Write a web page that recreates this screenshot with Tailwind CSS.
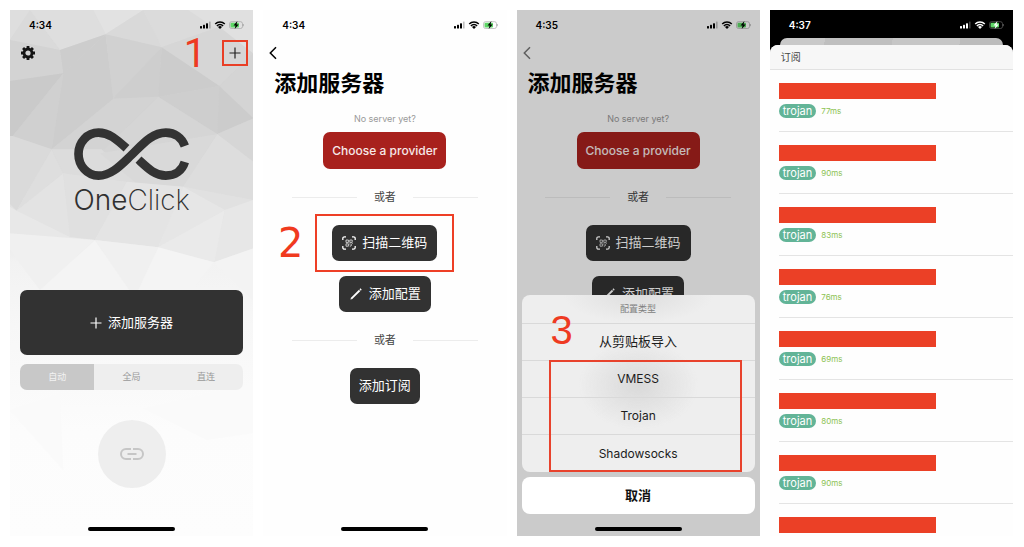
<!DOCTYPE html>
<html lang="zh-CN">
<head>
<meta charset="utf-8">
<meta name="viewport" content="width=device-width, initial-scale=1">
<title>OneClick</title>
<script src="https://cdn.jsdelivr.net/npm/@tailwindcss/browser@4"></script>
</head>
<body class="bg-white font-['Inter','Noto_Sans_CJK_SC',sans-serif] text-black">

<!-- Shared icons -->
<svg class="hidden" aria-hidden="true">
  <symbol id="status" viewBox="0 0 44 10">
    <g fill="currentColor">
      <rect x="0" y="6" width="2" height="2.5" rx=".5"/><rect x="3" y="4.8" width="2" height="3.7" rx=".5"/><rect x="6" y="3.2" width="2" height="5.3" rx=".5"/><rect x="9" y="1.5" width="1.6" height="7" rx=".5" opacity=".25"/>
      <path d="M20 9 18 6.900a2.800 2.800 0 0 1 4 0z"/>
    </g>
    <g fill="none" stroke="currentColor" stroke-width="1.500"><path d="M15.200 4a6.700 6.700 0 0 1 9.600 0"/><path d="M16.900 5.900a4.300 4.300 0 0 1 6.200 0"/></g>
    <rect x="29.500" y="1.700" width="13" height="6.800" rx="2" fill="none" stroke="#8a8a8a" stroke-opacity=".6" stroke-width=".8"/>
    <rect x="30.500" y="2.700" width="8.500" height="4.800" rx="1" fill="#5fd668"/>
    <path d="M43.300 4v2.200" stroke="#8a8a8a" stroke-opacity=".6"/>
    <path d="M37.400 1 33.500 5.600h2.100L34.700 9l4-4.500h-2.200z" fill="currentColor"/>
  </symbol>
  <symbol id="plus" viewBox="0 0 12 12"><path d="M6 .5v11M.5 6h11" fill="none" stroke="currentColor" stroke-width="1.200"/></symbol>
  <symbol id="back" viewBox="0 0 8 14"><path d="M7 1.200 1.300 7 7 12.800" fill="none" stroke="currentColor" stroke-width="1.500"/></symbol>
  <symbol id="scan" viewBox="0 0 14 14">
    <path d="M.8 4V2.500A1.700 1.700 0 0 1 2.500.8H4M10 .8h1.500a1.700 1.700 0 0 1 1.700 1.700V4M13.200 10v1.500a1.700 1.700 0 0 1-1.700 1.700H10M4 13.200H2.500A1.700 1.700 0 0 1 .8 11.500V10" fill="none" stroke="currentColor" stroke-width="1.300"/>
    <g fill="none" stroke="currentColor" stroke-width=".7"><path d="M4 4h2.400v2.400H4zM7.800 4h2.400v2.400H7.800zM4 7.800h2.400v2.400H4z"/></g>
    <path d="M7.500 7.500h1v1h-1zM9 8.500h1v1H9zM7.800 9.600h1v1h-1zM9.800 7.200h.8V8h-.8z" fill="currentColor"/>
  </symbol>
  <symbol id="pen" viewBox="0 0 14 14"><path d="M2.600 11.400 10.600 3.500M11.100 3l1-1" fill="none" stroke="currentColor" stroke-width="1.800"/><path d="m1.400 12.600.6-2.100 1.500 1.500z" fill="currentColor"/></symbol>
</svg>

<main class="grid min-h-screen grid-cols-4 gap-[10px] pt-[10px] pr-[11px] pb-[11px] pl-[10px]">

  <!-- Home -->
  <section class="relative isolate flex flex-col overflow-hidden bg-[#fcfcfc] pb-[5px]">
    <svg class="absolute inset-0 -z-10 h-full w-full" viewBox="0 0 730 1578" preserveAspectRatio="none" aria-hidden="true">
      <defs>
        <linearGradient id="sky" x1="0" y1="0" x2="0" y2="1578" gradientUnits="userSpaceOnUse">
          <stop offset="0" stop-color="#dedede"/><stop offset=".13" stop-color="#d1d1d1"/><stop offset=".22" stop-color="#cfcfcf"/><stop offset=".3" stop-color="#dadada"/><stop offset=".42" stop-color="#e6e6e6"/><stop offset=".48" stop-color="#f2f2f2"/><stop offset=".6" stop-color="#f7f7f7"/><stop offset=".8" stop-color="#fcfcfc"/><stop offset="1" stop-color="#fdfdfd"/>
        </linearGradient>
      </defs>
      <path fill="url(#sky)" d="M0 0h730v1578H0z"/>
      <path fill="#dedede" d="M0 0h60L0 90z"/><path fill="#dadada" d="M60 0 150 120 0 90z"/>
      <path fill="#dedede" d="M60 0h190l37 73-137 47z"/><path fill="#e2e2e2" d="M250 0h150L287 73z"/>
      <path fill="#d9d9d9" d="M400 0l55 112-168-39z"/><path fill="#dbdbdb" d="M400 0h135l93 50-173 62z"/>
      <path fill="#e0e0e0" d="M535 0h195v130z"/><path fill="#d6d6d6" d="M628 50l102 80-102 98-173-116z"/>
      <path fill="#d3d3d3" d="M0 90l150 30 10 70L0 213z"/><path fill="#cdcdcd" d="M150 120 287 73 160 190z"/>
      <path fill="#cdcdcd" d="M287 73 310 266 125 418 160 190z"/><path fill="#d1d1d1" d="M287 73l168 39-145 154z"/>
      <path fill="#cecece" d="M455 112l-10 148-135 6z"/><path fill="#cccccc" d="M455 112l173 116-183 32z"/>
      <path fill="#d4d4d4" d="M730 130v195L628 228z"/><path fill="#cacaca" d="M0 213l160-23L8 378H0z"/>
      <path fill="#d0d0d0" d="M160 190l-35 228L8 378z"/><path fill="#d3d3d3" d="M310 266l135-6-175 170-145-12z"/>
      <path fill="#cecece" d="M628 228l-6 144-177-112z"/><path fill="#cccccc" d="M628 228l102 97-108 47z"/>
      <path fill="#d5d5d5" d="M445 260l177 112-352 58z"/><path fill="#d6d6d6" d="M622 372l108-47v130z"/>
      <path fill="#dadada" d="M0 378h8l117 40-105 184-20-20z"/><path fill="#dedede" d="M125 418l35 72L20 602z"/>
      <path fill="#dcdcdc" d="M125 418h150l105 102-220-30z"/><path fill="#d9d9d9" d="M270 430l352-58-102 158-140-10z"/>
      <path fill="#dddddd" d="M622 372l108 83v115L520 530z"/>
      <path fill="#e3e3e3" d="M160 490 20 602l160 80z"/><path fill="#e0e0e0" d="M160 490l190 25-95 175-75-8z"/>
      <path fill="#e4e4e4" d="M350 515l170 15-75 182-190-22z"/><path fill="#e1e1e1" d="M520 530l210 40-85 30z"/>
      <path fill="#e6e6e6" d="M520 530l125 70-200 112z"/><path fill="#eaeaea" d="M645 600l-33 157-167-45z"/>
      <path fill="#e7e7e7" d="M645 600l85-30v145l-118 42z"/><path fill="#e8e8e8" d="M0 590l20 12 160 80L0 670z"/>
      <path fill="#e8e8e8" d="M0 670l180 12 75 8z"/>
      <path fill="#f0f0f0" d="M0 670l255 20L90 840 0 720z"/><path fill="#f4f4f4" d="M255 690 90 840l-10 60h320z"/>
      <path fill="#f0f0f0" d="M255 690l190 22-65 160z"/><path fill="#f4f4f4" d="M445 712l167 45-90 115H370z"/>
      <path fill="#f3f3f3" d="M612 757l118-42v157z"/>
      <path fill="#fafafa" d="M0 1200l150-50 10 230z"/><path fill="#fafafa" d="M400 1195l330-75v150l-140 20z"/>
    </svg>
    <div class="flex h-[30px] items-center justify-between pr-[9px] pl-[19px] text-[10px] font-semibold">
      <span>4:34</span>
      <svg class="h-[10px] w-[44px]" role="img" aria-label="Status"><use href="#status"/></svg>
    </div>
    <header class="flex h-[26px] items-center justify-between pr-[12px] pl-[11px]">
      <button type="button" aria-label="设置">
        <svg class="size-[14px]" viewBox="0 0 14 14" fill="none" stroke="#151515"><circle cx="7" cy="7" r="4" stroke-width="2.800"/><path stroke-width="2.800" d="M7 0v2.500M7 11.500V14M0 7h2.500M11.500 7H14M2.050 2.050l1.700 1.700M10.250 10.250l1.700 1.700M2.050 11.950l1.700-1.700M10.250 3.750l1.700-1.700"/></svg>
      </button>
      <div class="relative">
        <button type="button" aria-label="添加" class="flex size-[12px] text-[#222]"><svg class="size-[12px]"><use href="#plus"/></svg></button>
        <div class="absolute -inset-[7px] border-2 border-[#e93f26]"></div>
        <span class="absolute -top-[14px] right-[35px] font-['Roboto'] text-[40px] leading-[42px] text-[#ee3a22]">1</span>
      </div>
    </header>
    <div class="mt-[62px] flex flex-col items-center text-[#303030]">
      <svg class="h-[52px] w-[115px]" viewBox="222 384 344 156" fill="none" stroke="#333" stroke-width="26" role="img" aria-label="OneClick logo">
        <path d="M379 445C347 416 326 398 295 398c-34 0-60 29-60 64s26 65 60 65c40 0 70-35 100-63 32-31 60-66 102-66 27 0 48 15 57 40"/>
        <path d="M415 479c26 24 49 48 82 48 28 0 49-15 57-41"/>
      </svg>
      <h1 class="mt-[4px] text-[28px] leading-[32px] font-light">One<span class="font-extralight">Click</span></h1>
    </div>
    <button type="button" class="mx-[10px] mt-[74px] flex h-[65px] items-center justify-center gap-[6px] rounded-[7px] bg-[#323232] text-[13px] text-white">
      <svg class="size-[12px]"><use href="#plus"/></svg>添加服务器
    </button>
    <div class="mx-[10px] mt-[9px] grid h-[26px] grid-cols-3 overflow-hidden rounded-[7px] bg-[#eeeeee] text-[9px] text-[#999]">
      <button type="button" aria-pressed="true" class="bg-[#c8c8c8] text-[#f3f3f3]">自动</button>
      <button type="button" aria-pressed="false">全局</button>
      <button type="button" aria-pressed="false">直连</button>
    </div>
    <button type="button" aria-label="连接" class="mt-[30px] flex size-[68px] items-center justify-center self-center rounded-full bg-[#eeeeee]">
      <svg class="h-[12px] w-[24px]" viewBox="0 0 24 12" fill="none" stroke="#c6c6c6" stroke-width="2"><path d="M11 1H6a5 5 0 0 0 0 10h5M13 1h5a5 5 0 0 1 0 10h-5M7.500 6h9"/></svg>
    </button>
    <div class="mt-auto h-[4px] w-[87px] self-center rounded-full bg-black"></div>
  </section>

  <!-- Add server -->
  <section class="relative flex flex-col items-center bg-[#fefefe] pb-[5px]">
    <div class="flex h-[30px] items-center justify-between self-stretch pr-[9px] pl-[19px] text-[10px] font-semibold">
      <span>4:34</span>
      <svg class="h-[10px] w-[44px]" role="img" aria-label="Status"><use href="#status"/></svg>
    </div>
    <header class="flex h-[26px] items-center self-stretch px-[6px]">
      <button type="button" aria-label="返回"><svg class="h-[14px] w-[8px]"><use href="#back"/></svg></button>
    </header>
    <h2 class="self-stretch px-[11px] text-[22px] leading-[34px] font-bold">添加服务器</h2>
    <p class="mt-[12px] text-[9px] leading-[14px] text-[#999]">No server yet?</p>
    <button type="button" class="mt-[6px] h-[37px] rounded-[7px] bg-[#a8211d] px-[9px] text-[12px] font-medium text-[#f6e9e9]">Choose a provider</button>
    <div class="mt-[20px] flex items-center gap-[17px] text-[11px] leading-[16px] text-[#444]">
      <span class="h-px w-[65px] bg-[#ececec]"></span>或者<span class="h-px w-[65px] bg-[#ececec]"></span>
    </div>
    <div class="relative mt-[20px]">
      <button type="button" class="flex h-[36px] items-center gap-[6px] rounded-[7px] bg-[#323232] px-[10px] text-[13px] text-white"><svg class="size-[14px]"><use href="#scan"/></svg>扫描二维码</button>
      <div class="absolute -inset-x-[17px] -inset-y-[11px] border-2 border-[#ee3f26]"></div>
      <span class="absolute -top-[5px] right-full mr-[29px] font-['DejaVu_Sans'] text-[40px] leading-[46px] text-[#f03a1e]">2</span>
    </div>
    <button type="button" class="mt-[15px] flex h-[36px] items-center gap-[6px] rounded-[7px] bg-[#323232] px-[10px] text-[13px] text-white"><svg class="size-[14px]"><use href="#pen"/></svg>添加配置</button>
    <div class="mt-[20px] flex items-center gap-[17px] text-[11px] leading-[16px] text-[#444]">
      <span class="h-px w-[65px] bg-[#ececec]"></span>或者<span class="h-px w-[65px] bg-[#ececec]"></span>
    </div>
    <button type="button" class="mt-[20px] h-[36px] rounded-[7px] bg-[#323232] px-[9px] text-[13px] text-white">添加订阅</button>
    <div class="mt-auto h-[4px] w-[87px] rounded-full bg-black"></div>
  </section>

  <!-- Add server with the action sheet open -->
  <section class="relative flex flex-col items-center bg-[#fefefe] pb-[5px]">
    <div class="flex h-[30px] items-center justify-between self-stretch pr-[9px] pl-[19px] text-[10px] font-semibold">
      <span>4:35</span>
      <svg class="h-[10px] w-[44px]" role="img" aria-label="Status"><use href="#status"/></svg>
    </div>
    <header class="flex h-[26px] items-center self-stretch px-[6px] text-[#777]">
      <button type="button" aria-label="返回"><svg class="h-[14px] w-[8px]"><use href="#back"/></svg></button>
    </header>
    <h2 class="self-stretch px-[11px] text-[22px] leading-[34px] font-bold">添加服务器</h2>
    <p class="mt-[12px] text-[9px] leading-[14px] text-[#999]">No server yet?</p>
    <button type="button" class="mt-[6px] h-[37px] rounded-[7px] bg-[#a8211d] px-[9px] text-[12px] font-medium text-[#f6e9e9]">Choose a provider</button>
    <div class="mt-[20px] flex items-center gap-[17px] text-[11px] leading-[16px] text-[#444]">
      <span class="h-px w-[65px] bg-[#ececec]"></span>或者<span class="h-px w-[65px] bg-[#ececec]"></span>
    </div>
    <button type="button" class="mt-[20px] flex h-[36px] items-center gap-[6px] rounded-[7px] bg-[#323232] px-[10px] text-[13px] text-white"><svg class="size-[14px]"><use href="#scan"/></svg>扫描二维码</button>
    <button type="button" class="mt-[15px] flex h-[36px] items-center gap-[6px] rounded-[7px] bg-[#323232] px-[10px] text-[13px] text-white"><svg class="size-[14px]"><use href="#pen"/></svg>添加配置</button>

    <div class="absolute inset-0 bg-black/20"></div>
    <div class="absolute inset-x-[5px] bottom-[22px] flex flex-col gap-[5px]" role="dialog" aria-label="配置类型">
      <div class="relative">
        <div class="flex flex-col divide-y divide-[#d9d9d9] overflow-hidden rounded-[8px] bg-[#eeeeee] bg-[radial-gradient(ellipse_60px_45px_at_50%_90px,#d9d9d9,transparent),radial-gradient(ellipse_75px_28px_at_50%_0px,#dedede,transparent)] text-[12px] text-[#1c1c1c]">
          <p class="h-[29px] text-center text-[9px] leading-[28px] text-[#808080]">配置类型</p>
          <button type="button" class="h-[37px] text-[13px]">从剪贴板导入</button>
          <button type="button" class="h-[37px]">VMESS</button>
          <button type="button" class="h-[37px]">Trojan</button>
          <button type="button" class="h-[37px]">Shadowsocks</button>
        </div>
        <div class="absolute top-[65px] right-[13px] bottom-0 left-[27px] border-2 border-[#e8422c]"></div>
        <span class="absolute top-[14px] left-[29px] font-['Liberation_Sans'] text-[40px] leading-[42px] text-[#ee3a22]">3</span>
      </div>
      <button type="button" class="h-[37px] rounded-[8px] bg-white text-[13px] font-bold text-[#111]">取消</button>
    </div>
    <div class="relative mt-auto h-[4px] w-[87px] rounded-full bg-black"></div>
  </section>

  <!-- Subscription list -->
  <section class="flex flex-col bg-black">
    <div class="flex h-[28px] items-center justify-between pt-[2px] pr-[9px] pl-[19px] text-[10px] font-semibold text-white">
      <span>4:37</span>
      <svg class="h-[10px] w-[44px]" role="img" aria-label="Status"><use href="#status"/></svg>
    </div>
    <div class="mx-[10px] h-[15px] rounded-t-[7px] bg-[linear-gradient(100deg,#c9c9c9_20%,#bfbfbf_20%_50%,#c6c6c6_50%_80%,#bcbcbc_80%)]"></div>
    <div class="-mt-[8px] flex grow flex-col overflow-hidden rounded-t-[8px] bg-[#fefefe]">
      <h2 class="h-[25px] border-b border-[#e2e2e2] bg-[#f7f7f7] px-[11px] text-[10px] leading-[24px] text-[#444]">订阅</h2>
      <ul class="pb-[3px] pl-[9px] text-[11px] text-white">
        <li class="flex flex-col gap-[5px] border-b border-[#e4e4e4] pt-[13px] pb-[13px]"><div class="h-[16px] w-[157px] bg-[#eb4026]"></div><div class="flex items-center gap-[5px]"><span class="rounded-full bg-[#62b497] px-[4px] leading-[14px]">trojan</span><span class="text-[8px] leading-[14px] text-[#8cc252]">77ms</span></div></li>
        <li class="flex flex-col gap-[5px] border-b border-[#e4e4e4] pt-[13px] pb-[13px]"><div class="h-[16px] w-[157px] bg-[#eb4026]"></div><div class="flex items-center gap-[5px]"><span class="rounded-full bg-[#62b497] px-[4px] leading-[14px]">trojan</span><span class="text-[8px] leading-[14px] text-[#8cc252]">90ms</span></div></li>
        <li class="flex flex-col gap-[5px] border-b border-[#e4e4e4] pt-[13px] pb-[13px]"><div class="h-[16px] w-[157px] bg-[#eb4026]"></div><div class="flex items-center gap-[5px]"><span class="rounded-full bg-[#62b497] px-[4px] leading-[14px]">trojan</span><span class="text-[8px] leading-[14px] text-[#8cc252]">83ms</span></div></li>
        <li class="flex flex-col gap-[5px] border-b border-[#e4e4e4] pt-[13px] pb-[13px]"><div class="h-[16px] w-[157px] bg-[#eb4026]"></div><div class="flex items-center gap-[5px]"><span class="rounded-full bg-[#62b497] px-[4px] leading-[14px]">trojan</span><span class="text-[8px] leading-[14px] text-[#8cc252]">76ms</span></div></li>
        <li class="flex flex-col gap-[5px] border-b border-[#e4e4e4] pt-[13px] pb-[13px]"><div class="h-[16px] w-[157px] bg-[#eb4026]"></div><div class="flex items-center gap-[5px]"><span class="rounded-full bg-[#62b497] px-[4px] leading-[14px]">trojan</span><span class="text-[8px] leading-[14px] text-[#8cc252]">69ms</span></div></li>
        <li class="flex flex-col gap-[5px] border-b border-[#e4e4e4] pt-[13px] pb-[13px]"><div class="h-[16px] w-[157px] bg-[#eb4026]"></div><div class="flex items-center gap-[5px]"><span class="rounded-full bg-[#62b497] px-[4px] leading-[14px]">trojan</span><span class="text-[8px] leading-[14px] text-[#8cc252]">80ms</span></div></li>
        <li class="flex flex-col gap-[5px] border-b border-[#e4e4e4] pt-[13px] pb-[13px]"><div class="h-[16px] w-[157px] bg-[#eb4026]"></div><div class="flex items-center gap-[5px]"><span class="rounded-full bg-[#62b497] px-[4px] leading-[14px]">trojan</span><span class="text-[8px] leading-[14px] text-[#8cc252]">90ms</span></div></li>
        <li class="pt-[13px]"><div class="h-[16px] w-[157px] bg-[#eb4026]"></div></li>
      </ul>
    </div>
  </section>
</main>
</body>
</html>
